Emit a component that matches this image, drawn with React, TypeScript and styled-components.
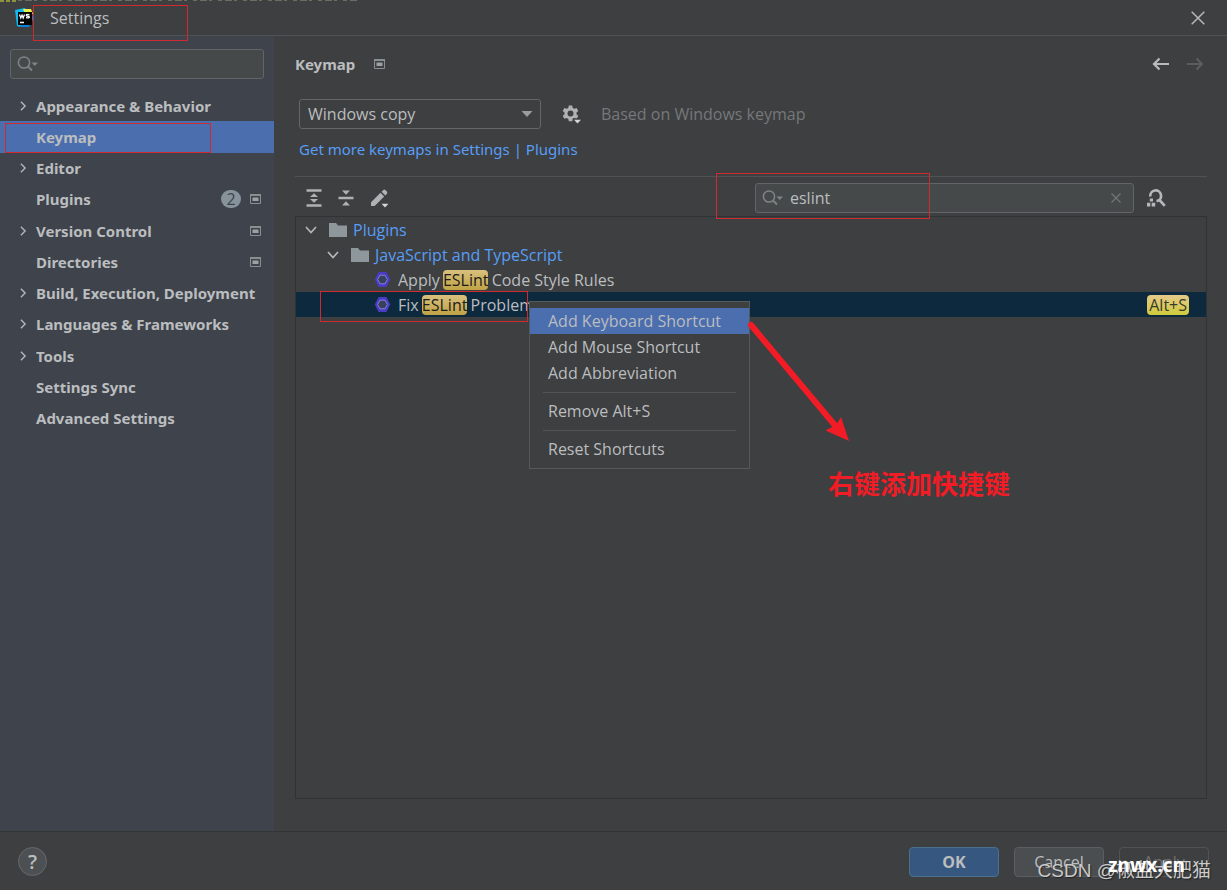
import React from "react";
import styled, { createGlobalStyle, css } from "styled-components";

const Global = createGlobalStyle`
  *, *::before, *::after { box-sizing: border-box; }
  body {
    margin: 0;
    background: #3d3f41;
    color: #bbbdbf;
    font-family: "Open Sans", "Noto Sans", "Noto Sans CJK SC", sans-serif;
    font-size: 16px;
    line-height: 20px;
  }
  button, input, select { font: inherit; color: inherit; }
  ul { list-style: none; margin: 0; padding: 0; }
`;

const Dialog = styled.div`
  position: relative;
  min-height: 100vh;
  display: flex;
  flex-direction: column;
  overflow: hidden;
`;

const TitleBar = styled.header`
  position: relative;
  display: flex;
  align-items: center;
  gap: 16px;
  height: 36px;
  padding: 1px 22px 0 14px;
  border-bottom: 1px solid #505254;
`;

const BackdropEdge = styled.svg`
  position: absolute;
  left: 0;
  top: 0;
`;

const Title = styled.h1`
  flex: 1;
  margin: 0;
  font-size: 16px;
  font-weight: 400;
`;

const IconButton = styled.button`
  display: flex;
  align-items: center;
  justify-content: center;
  padding: 0;
  border: 0;
  background: none;
  flex: none;
`;

const Body = styled.div`
  flex: 1;
  display: flex;
`;

const Sidebar = styled.nav`
  flex: none;
  width: 274px;
  padding-top: 13px;
  background: #3e434c;
`;

const Field = styled.label<{ $width?: number }>`
  display: flex;
  align-items: center;
  gap: 6px;
  height: 30px;
  width: ${(p) => (p.$width ? `${p.$width}px` : "auto")};
  padding: 0 12px 0 6px;
  border: 1px solid #616567;
  border-radius: 3px;
  background: #45494a;
  input {
    flex: 1;
    min-width: 0;
    padding: 0;
    border: 0;
    outline: 0;
    background: none;
  }
`;

const SidebarSearch = styled.div`
  padding: 0 10px;
`;

const NavList = styled.ul`
  display: flex;
  flex-direction: column;
  height: 344px;
  margin-top: 11px;
`;

const NavRow = styled.li<{ $selected?: boolean }>`
  position: relative;
  flex: 1;
  display: flex;
  align-items: center;
  gap: 8px;
  padding: 0 12px 0 18px;
  background: ${(p) => (p.$selected ? "#4b6eaf" : "transparent")};
`;

const NavLink = styled.a`
  flex: 1;
  color: inherit;
  font-family: "Noto Sans", sans-serif;
  font-size: 15px;
  font-weight: 700;
  text-decoration: none;
  white-space: nowrap;
`;

const Slot = styled.span`
  display: flex;
  justify-content: center;
  width: 10px;
  flex: none;
`;

const Count = styled.span`
  width: 20px;
  height: 18px;
  border-radius: 9px;
  background: #87939a;
  color: #3e434c;
  line-height: 18px;
  text-align: center;
`;

const Main = styled.main`
  flex: 1;
  min-width: 0;
  display: flex;
  flex-direction: column;
  padding: 0 20px 32px 21px;
`;

const PageHead = styled.div`
  display: flex;
  align-items: center;
  gap: 18px;
  height: 56px;
  padding-right: 3px;
`;

const PageTitle = styled.h2`
  margin: 0;
  font-family: "Noto Sans", sans-serif;
  font-size: 15px;
  font-weight: 700;
`;

const History = styled.div`
  display: flex;
  gap: 16px;
  margin-left: auto;
`;

const SchemeRow = styled.div`
  display: flex;
  align-items: center;
  margin-top: 7px;
  padding-left: 4px;
`;

const Combo = styled.div`
  position: relative;
  width: 242px;
  svg {
    position: absolute;
    right: 8px;
    top: 11px;
    pointer-events: none;
  }
`;

const Select = styled.select`
  appearance: none;
  width: 100%;
  height: 30px;
  padding: 0 8px;
  border: 1px solid #646668;
  border-radius: 3px;
  outline: 0;
  background: #3d3f41;
`;

const SchemeGear = styled(IconButton)`
  margin: 0 19px 0 21px;
`;

const Hint = styled.span`
  color: #76787a;
`;

const Link = styled.a`
  align-self: flex-start;
  margin: 10px 4px 17px;
  color: #589df6;
  font-family: "Noto Sans", sans-serif;
  font-size: 15px;
  text-decoration: none;
`;

const Toolbar = styled.div`
  display: flex;
  align-items: center;
  gap: 12px;
  padding: 6px 41px 3px 9px;
  border-top: 1px solid #505254;
`;

const SearchWrap = styled.div`
  position: relative;
  margin-left: auto;
`;

const TreePanel = styled.div`
  position: relative;
  flex: 1;
  border: 1px solid #303234;
`;

const Row = styled.div<{ $level: number; $selected?: boolean; $group?: boolean }>`
  display: flex;
  align-items: center;
  height: 25px;
  padding: 0 17px 0 ${(p) => 9 + p.$level * 22}px;
  white-space: pre;
  color: ${(p) => (p.$group ? "#589df6" : "inherit")};
  background: ${(p) => (p.$selected ? "#0d293e" : "transparent")};
`;

const RowIcon = styled.span`
  display: flex;
  margin: 0 6px 0 12px;
`;

const ActionIcon = styled.span`
  display: flex;
  margin: 0 7px 0 3px;
`;

const chip = css`
  height: 20px;
  border-radius: 4px;
  line-height: 20px;
  color: #1c1c1c;
`;

const Match = styled.mark`
  ${chip}
  margin: 0 -1px;
  background: linear-gradient(#d9c07d, #c0a345);
`;

const Shortcut = styled.kbd`
  ${chip}
  margin-left: auto;
  padding: 0 2px;
  background: linear-gradient(#e6c98a, #cfcb3c);
  color: #3a3a2a;
  font-family: inherit;
`;

const Menu = styled.div`
  position: absolute;
  z-index: 2;
  left: 233px;
  top: 84px;
  width: 221px;
  padding: 6px 0;
  border: 1px solid #56585a;
  background: #3d3f41;
`;

const MenuItem = styled.button<{ $active?: boolean }>`
  display: block;
  width: 100%;
  height: 26px;
  padding: 0 18px;
  border: 0;
  text-align: left;
  background: ${(p) => (p.$active ? "#4b6eaf" : "transparent")};
`;

const MenuRule = styled.hr`
  height: 1px;
  margin: 6px 13px 5px;
  border: 0;
  background: #525456;
`;

const Outline = styled.span<{ $x: number; $y: number; $w: number; $h: number }>`
  position: absolute;
  z-index: 1;
  left: ${(p) => p.$x}px;
  top: ${(p) => p.$y}px;
  width: ${(p) => p.$w}px;
  height: ${(p) => p.$h}px;
  border: 1px solid #cf2a30;
  pointer-events: none;
`;

const Arrow = styled.svg`
  position: absolute;
  z-index: 3;
  left: 450px;
  top: 100px;
`;

const Note = styled.p`
  position: absolute;
  left: 532px;
  top: 248px;
  margin: 0;
  color: #f11c25;
  font-family: "Noto Sans CJK SC", sans-serif;
  font-size: 26px;
  font-weight: 700;
  line-height: 36px;
  white-space: nowrap;
`;

const Footer = styled.footer`
  position: relative;
  display: flex;
  align-items: center;
  gap: 15px;
  height: 59px;
  padding: 1px 18px 0;
  border-top: 1px solid #323436;
`;

const HelpButton = styled.button`
  width: 29px;
  height: 29px;
  margin-right: auto;
  padding: 0;
  border: 1px solid #66696b;
  border-radius: 50%;
  background: #4c5052;
  font-size: 20px;
  font-weight: 600;
`;

const Button = styled.button<{ $kind?: "primary" | "disabled" }>`
  width: 90px;
  height: 30px;
  padding: 0;
  border: 1px solid ${(p) => (p.$kind === "primary" ? "#4c708c" : p.$kind === "disabled" ? "#505254" : "#5a5e60")};
  border-radius: 4px;
  background: ${(p) => (p.$kind === "primary" ? "#365880" : p.$kind === "disabled" ? "transparent" : "#4a4e50")};
  color: ${(p) => (p.$kind === "disabled" ? "#6f7173" : "inherit")};
  font-weight: ${(p) => (p.$kind === "primary" ? 700 : 400)};
`;

const Watermark = styled.span`
  position: absolute;
  right: 16px;
  bottom: 5px;
  color: #c9cacb;
  font-family: "Liberation Sans", "Noto Sans CJK SC", sans-serif;
  font-size: 19px;
  line-height: 28px;
  text-shadow: 1px 1px 1px #222;
  white-space: nowrap;
`;

const SiteMark = styled.span`
  position: absolute;
  right: 42px;
  bottom: 12px;
  color: #fff;
  font-family: "Open Sans", sans-serif;
  font-size: 19px;
  font-weight: 700;
  line-height: 26px;
`;

const Logo = () => (
  <svg width="20" height="20" viewBox="0 0 20 20" aria-hidden="true">
    <path d="M1 2 11 0 14 5 6 19 3 18Z" fill="#12b8f0" />
    <path d="M9 1 17 1 19 6 12 8Z" fill="#e9f24b" />
    <path d="M17 5 20 10 15 19 6 19Z" fill="#0b7fe0" />
    <rect x="4" y="4" width="14" height="13" fill="#050505" />
    <path d="M5.500 6.500 6.800 10 8 7.200 9.200 10 10.500 6.500M15.600 7Q12.200 5.800 12.300 7.400C12.400 8.700 15.600 7.900 15.500 9.200Q15.200 10.500 12 9.600M6 14.500H10" fill="none" stroke="#fff" strokeWidth="1.300" />
  </svg>
);

const Close = ({ size, color }: { size: number; color: string }) => (
  <svg width={size} height={size} viewBox="0 0 12 12" aria-hidden="true">
    <path d="M.6.6 11.400 11.400M11.400.6.6 11.400" stroke={color} strokeWidth="1.300" />
  </svg>
);

const Magnifier = () => (
  <svg width="22" height="18" viewBox="0 0 22 18" aria-hidden="true">
    <circle cx="7" cy="7.500" r="5.600" fill="none" stroke="#7f8486" strokeWidth="1.500" />
    <path d="M11 11.500 15 15.500" stroke="#7f8486" strokeWidth="1.800" />
    <path d="M14.500 7.500H21L17.750 11Z" fill="#7f8486" />
  </svg>
);

const Chevron = ({ open }: { open?: boolean }) => (
  <svg width="12" height="12" viewBox="0 0 12 12" aria-hidden="true">
    <path d={open ? "M1 3 6 8.500 11 3" : "M3.500 1 8.500 6 3.500 11"} fill="none" stroke="#b4b6b8" strokeWidth="1.700" />
  </svg>
);

const ProjectMark = () => (
  <svg width="13" height="12" viewBox="0 0 13 12" aria-hidden="true">
    <path d="M1.500 1.500H11.500V10.500H1.500Z" fill="none" stroke="#87908f" />
    <path d="M1 1H12V3H1Z" fill="#87908f" />
    <path d="M3.500 4.500H9.500V8H3.500Z" fill="#9aa2a5" />
  </svg>
);

const HistoryArrow = ({ forward }: { forward?: boolean }) => (
  <svg width="18" height="14" viewBox="0 0 18 14" aria-hidden="true">
    <path
      d={forward ? "M1 7H16M10.500 1.500 16 7 10.500 12.500" : "M17 7H2M7.500 1.500 2 7 7.500 12.500"}
      fill="none"
      stroke={forward ? "#5b5d5f" : "#b9bbbd"}
      strokeWidth="2.200"
    />
  </svg>
);

const Gear = () => (
  <svg width="20" height="20" viewBox="0 0 20 20" aria-hidden="true">
    <path
      fill="#afb1b3"
      fillRule="evenodd"
      d="M6.800 1.500H10.200L10.700 3.900 12.300 4.800 14.600 4 16.300 6.900 14.500 8.500V10.300L16.300 11.900 14.600 14.800 12.300 14 10.700 14.900 10.200 17.300H6.800L6.300 14.900 4.700 14 2.400 14.800.7 11.900 2.500 10.300V8.500L.7 6.900 2.400 4 4.700 4.800 6.300 3.900ZM8.500 6.400A3 3 0 1 0 8.500 12.400 3 3 0 1 0 8.500 6.400Z"
    />
    <path d="M10.500 14.500H20V20H13Z" fill="#3d3f41" />
    <path d="M12 15.800H19L15.500 19.500Z" fill="#d5d7d9" />
  </svg>
);

const ExpandAll = () => (
  <svg width="20" height="20" viewBox="0 0 20 20" fill="#afb1b3" aria-hidden="true">
    <path d="M2.500 1.200H17.500V3.700H2.500ZM2.500 16.300H17.500V18.800H2.500ZM10 5.200 14 9H6ZM10 14.800 14 11H6Z" />
  </svg>
);

const CollapseAll = () => (
  <svg width="20" height="20" viewBox="0 0 20 20" fill="#afb1b3" aria-hidden="true">
    <path d="M2.500 8.800H17.500V11.200H2.500ZM10 6.700 14 2.500H6ZM10 13.300 14 17.500H6Z" />
  </svg>
);

const EditPencil = () => (
  <svg width="22" height="20" viewBox="0 0 22 20" fill="#afb1b3" aria-hidden="true">
    <path d="M3 18V14.300L12.500 4.800 16.200 8.500 6.700 18ZM13.600 3.700 15.300 2Q16.300 1.200 17.300 2L18.900 3.600Q19.700 4.700 19 5.700L17.300 7.400Z" />
    <path d="M13.500 15.800H20.500L17 19.500Z" fill="#d5d7d9" />
  </svg>
);

const FindShortcut = () => (
  <svg width="20" height="20" viewBox="0 0 20 20" aria-hidden="true">
    <path d="M4.300 8.500A5.400 5.400 0 1 1 10.500 13.200M13 11.500 18.800 17.800" fill="none" stroke="#b5b7b9" strokeWidth="2.700" />
    <path d="M3.800 10.500H7V13.500H3.800ZM1 14.800H4.300V18.500H1ZM5.700 14.800H9.200V18.500H5.700Z" fill="#b5b7b9" />
  </svg>
);

const Folder = () => (
  <svg width="18" height="16" viewBox="0 0 18 16" aria-hidden="true">
    <path d="M0 1H7L9 3.500H18V15H0Z" fill="#8d979c" />
  </svg>
);

const EslintIcon = () => (
  <svg width="17" height="17" viewBox="0 0 17 17" aria-hidden="true">
    <path d="M4.600 1H12.400L16.200 8.500 12.400 16H4.600L.8 8.500Z" fill="#4b3bc4" />
    <path d="M6 4.200H11L13.400 8.500 11 12.800H6L3.600 8.500Z" fill="#38405a" stroke="#7f83dc" />
  </svg>
);

type NavEntry = { name: string; expandable?: boolean; project?: boolean; count?: number; selected?: boolean };

const sections: NavEntry[] = [
  { name: "Appearance & Behavior", expandable: true },
  { name: "Keymap", selected: true },
  { name: "Editor", expandable: true },
  { name: "Plugins", count: 2, project: true },
  { name: "Version Control", expandable: true, project: true },
  { name: "Directories", project: true },
  { name: "Build, Execution, Deployment", expandable: true },
  { name: "Languages & Frameworks", expandable: true },
  { name: "Tools", expandable: true },
  { name: "Settings Sync" },
  { name: "Advanced Settings" },
];

export default function App() {
  return (
    <>
      <Global />
      <Dialog>
        <TitleBar>
          <BackdropEdge width="360" height="2" viewBox="0 0 360 2" aria-hidden="true">
            <path d="M0 1H16" stroke="#8c9440" strokeWidth="2" strokeDasharray="4 2" />
            <path d="M18 .5H358" stroke="#6a6d60" strokeDasharray="4 3 7 2 3 6" />
          </BackdropEdge>
          <Logo />
          <Title>Settings</Title>
          <IconButton aria-label="Close">
            <Close size={14} color="#b5b7b9" />
          </IconButton>
          <Outline $x={33} $y={5} $w={155} $h={36} />
        </TitleBar>

        <Body>
          <Sidebar aria-label="Settings sections">
            <SidebarSearch>
              <Field>
                <Magnifier />
                <input type="text" aria-label="Search settings" />
              </Field>
            </SidebarSearch>
            <NavList>
              {sections.map((s) => (
                <NavRow key={s.name} $selected={s.selected}>
                  <Slot>{s.expandable && <Chevron />}</Slot>
                  <NavLink href="#">{s.name}</NavLink>
                  {s.count && <Count>{s.count}</Count>}
                  {s.project && <ProjectMark />}
                  {s.selected && <Outline $x={5} $y={2} $w={206} $h={30} />}
                </NavRow>
              ))}
            </NavList>
          </Sidebar>

          <Main>
            <PageHead>
              <PageTitle>Keymap</PageTitle>
              <ProjectMark />
              <History>
                <IconButton aria-label="Back">
                  <HistoryArrow />
                </IconButton>
                <IconButton aria-label="Forward" disabled>
                  <HistoryArrow forward />
                </IconButton>
              </History>
            </PageHead>

            <SchemeRow>
              <Combo>
                <Select aria-label="Keymap scheme" defaultValue="Windows copy">
                  <option>Windows copy</option>
                </Select>
                <svg width="12" height="8" viewBox="0 0 12 8" aria-hidden="true">
                  <path d="M.5 1H11.500L6 7Z" fill="#9a9c9e" />
                </svg>
              </Combo>
              <SchemeGear aria-label="Scheme actions">
                <Gear />
              </SchemeGear>
              <Hint>Based on Windows keymap</Hint>
            </SchemeRow>
            <Link href="#">Get more keymaps in Settings | Plugins</Link>

            <Toolbar>
              <IconButton aria-label="Expand all">
                <ExpandAll />
              </IconButton>
              <IconButton aria-label="Collapse all">
                <CollapseAll />
              </IconButton>
              <IconButton aria-label="Edit shortcut">
                <EditPencil />
              </IconButton>
              <SearchWrap>
                <Field $width={379}>
                  <Magnifier />
                  <input type="text" aria-label="Search actions" defaultValue="eslint" />
                  <IconButton aria-label="Clear search">
                    <Close size={10} color="#74787a" />
                  </IconButton>
                </Field>
                <Outline $x={-39} $y={-10} $w={214} $h={46} />
              </SearchWrap>
              <IconButton aria-label="Find actions by shortcut">
                <FindShortcut />
              </IconButton>
            </Toolbar>

            <TreePanel>
              <div role="tree" aria-label="Actions">
                <Row role="treeitem" $level={0} $group>
                  <Chevron open />
                  <RowIcon>
                    <Folder />
                  </RowIcon>
                  Plugins
                </Row>
                <Row role="treeitem" $level={1} $group>
                  <Chevron open />
                  <RowIcon>
                    <Folder />
                  </RowIcon>
                  JavaScript and TypeScript
                </Row>
                <Row role="treeitem" $level={3}>
                  <ActionIcon>
                    <EslintIcon />
                  </ActionIcon>
                  Apply <Match>ESLint</Match> Code Style Rules
                </Row>
                <Row role="treeitem" $level={3} $selected aria-selected>
                  <ActionIcon>
                    <EslintIcon />
                  </ActionIcon>
                  Fix <Match>ESLint</Match> Problems
                  <Shortcut>Alt+S</Shortcut>
                </Row>
              </div>
              <Outline $x={24} $y={74} $w={208} $h={31} />
              <Menu role="menu">
                <MenuItem role="menuitem" $active>
                  Add Keyboard Shortcut
                </MenuItem>
                <MenuItem role="menuitem">Add Mouse Shortcut</MenuItem>
                <MenuItem role="menuitem">Add Abbreviation</MenuItem>
                <MenuRule />
                <MenuItem role="menuitem">Remove Alt+S</MenuItem>
                <MenuRule />
                <MenuItem role="menuitem">Reset Shortcuts</MenuItem>
              </Menu>
              <Arrow width="106" height="126" viewBox="0 0 106 126" aria-hidden="true">
                <path d="M5 8 92 112" stroke="#f11c25" strokeWidth="6" strokeLinecap="round" />
                <path d="M103 124 79.500 113.500 90 108 95 100Z" fill="#f11c25" />
              </Arrow>
              <Note>右键添加快捷键</Note>
            </TreePanel>
          </Main>
        </Body>

        <Footer>
          <HelpButton aria-label="Help">?</HelpButton>
          <Button $kind="primary">OK</Button>
          <Button>Cancel</Button>
          <Button $kind="disabled" disabled>
            Apply
          </Button>
          <Watermark>CSDN @椒盐大肥猫</Watermark>
          <SiteMark>znwx.cn</SiteMark>
        </Footer>
      </Dialog>
    </>
  );
}
